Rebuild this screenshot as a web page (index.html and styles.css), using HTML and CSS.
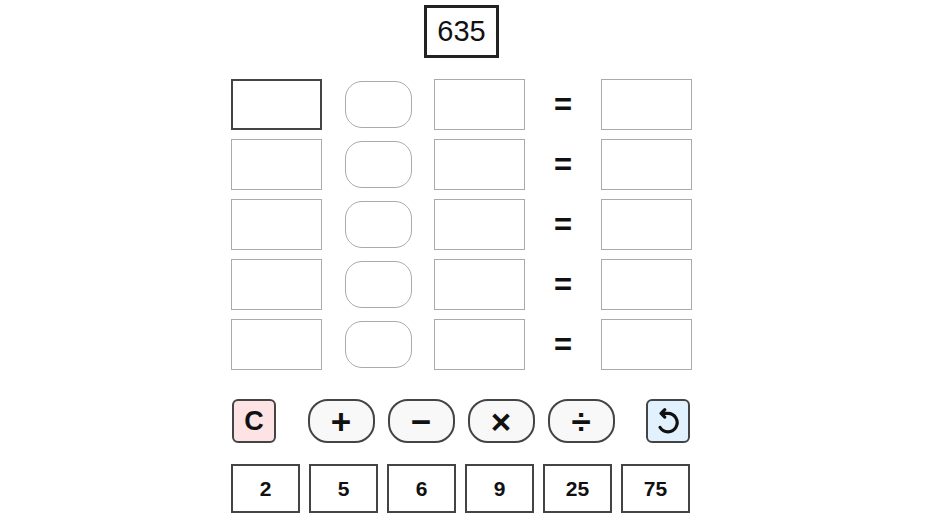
FILE: index.html
```html
<!DOCTYPE html>
<html>
<head>
<meta charset="utf-8">
<link rel="stylesheet" href="styles.css">
</head>
<body>
<main class="game">
  <div class="target-wrap"><div class="target">635</div></div>
  <div class="board">
    <div class="cell active"></div><div class="op-slot"><div class="op-cell"></div></div><div class="cell"></div><div class="eq">=</div><div class="cell"></div>
    <div class="cell"></div><div class="op-slot"><div class="op-cell"></div></div><div class="cell"></div><div class="eq">=</div><div class="cell"></div>
    <div class="cell"></div><div class="op-slot"><div class="op-cell"></div></div><div class="cell"></div><div class="eq">=</div><div class="cell"></div>
    <div class="cell"></div><div class="op-slot"><div class="op-cell"></div></div><div class="cell"></div><div class="eq">=</div><div class="cell"></div>
    <div class="cell"></div><div class="op-slot"><div class="op-cell"></div></div><div class="cell"></div><div class="eq">=</div><div class="cell"></div>
  </div>
  <div class="controls">
    <button class="btn-clear">C</button>
    <div class="ops">
      <button class="btn-op">+</button>
      <button class="btn-op">−</button>
      <button class="btn-op">×</button>
      <button class="btn-op">÷</button>
    </div>
    <button class="btn-undo"><svg viewBox="0 0 24 24" width="26" height="26"><path d="M7 5 H12 A8.5 8.5 0 1 1 4.6 17.8" fill="none" stroke="#111" stroke-width="2.9" stroke-linecap="round"/><path d="M9 1.6 L5.6 5 L9 8.4" fill="none" stroke="#111" stroke-width="2.9" stroke-linecap="round" stroke-linejoin="round"/></svg></button>
  </div>
  <div class="numbers">
    <div class="num">2</div><div class="num">5</div><div class="num">6</div><div class="num">9</div><div class="num">25</div><div class="num">75</div>
  </div>
</main>
</body>
</html>
```
FILE: styles.css
```css
html, body { margin: 0; padding: 0; background: #fff; }
body { font-family: "Liberation Sans", Arial, sans-serif; color: #111; padding-right: 5px; }
.game { width: 461px; margin: 0 auto; padding-top: 5px; }
.target-wrap { display: flex; justify-content: center; }
.target {
  box-sizing: border-box; width: 75px; height: 53px;
  border: 3px solid #222; display: flex; align-items: center; justify-content: center;
  font-size: 29px; color: #111;
}
.board {
  margin-top: 21px;
  display: grid;
  grid-template-columns: 91px 112px 91px 76px 91px;
  grid-auto-rows: 51px;
  row-gap: 9px;
}
.cell { box-sizing: border-box; border: 1px solid #aaa; }
.cell.active { border: 2px solid #444; }
.op-slot { display: flex; align-items: center; justify-content: center; }
.op-cell { box-sizing: border-box; width: 67px; height: 47px; border: 1px solid #aaa; border-radius: 17px; }
.eq { display: flex; align-items: center; justify-content: center; font-weight: bold; font-size: 31px; }
.controls {
  margin-top: 29px; display: flex; justify-content: space-between; align-items: center;
  padding: 0 2px 0 1px;
}
.controls button {
  box-sizing: border-box; height: 44px; border: 2px solid #444; padding: 0;
  font-family: "Liberation Sans", Arial, sans-serif; font-weight: bold; color: #111;
  display: flex; align-items: center; justify-content: center;
}
.btn-clear { width: 44px; border-radius: 6px; background: #fde3e3; font-size: 27px; }
.btn-undo { width: 44px; border-radius: 6px; background: #e1f1fd; }
.ops { display: flex; gap: 13px; }
.btn-op { width: 67px; border-radius: 20px; background: #f8f8f8; font-size: 35px; line-height: 1; }
.numbers { margin-top: 21px; display: flex; gap: 9px; }
.num {
  box-sizing: border-box; width: 69px; height: 49px; border: 2px solid #444;
  display: flex; align-items: center; justify-content: center;
  font-weight: bold; font-size: 21px;
}
```
